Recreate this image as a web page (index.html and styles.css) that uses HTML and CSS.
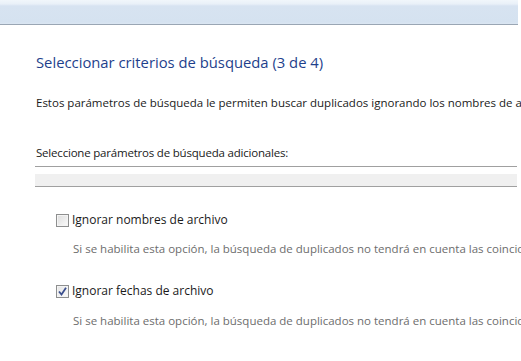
FILE: index.html
```html
<!DOCTYPE html>
<html lang="es">
<head>
    <meta charset="UTF-8">
    <meta name="viewport" content="width=device-width, initial-scale=1.0">
    <title>Seleccionar criterios de búsqueda</title>
    <link rel="stylesheet" href="styles.css">
</head>
<body>

    <!-- Window header strip -->
    <div class="titlebar"></div>

    <!-- Wizard page -->
    <div class="content">
        <h1 class="instruction">Seleccionar criterios de búsqueda (3 de 4)</h1>
        <p class="intro">Estos parámetros de búsqueda le permiten buscar duplicados ignorando los nombres de archivo, las fechas y los tamaños.</p>

        <p class="group-label">Seleccione parámetros de búsqueda adicionales:</p>
        <div class="divider"><div class="band"></div></div>

        <div class="option first">
            <label class="check"><span class="box"></span>Ignorar nombres de archivo</label>
            <p class="desc">Si se habilita esta opción, la búsqueda de duplicados no tendrá en cuenta las coincidencias de nombres de archivo.</p>
        </div>

        <div class="option">
            <label class="check"><span class="box checked">
                <svg width="9" height="9" viewBox="0 0 9 9"><path d="M1 4.5 L3.5 7.5 L8 0.8" fill="none" stroke="#3b4f8e" stroke-width="1.8"/></svg>
            </span>Ignorar fechas de archivo</label>
            <p class="desc">Si se habilita esta opción, la búsqueda de duplicados no tendrá en cuenta las coincidencias de fechas de archivo.</p>
        </div>
    </div>

</body>
</html>
```

FILE: styles.css
```css
body {
    font-family: 'Open Sans', 'Noto Sans', sans-serif;
    font-size: 11.5px;
    color: #1a1a1a;
    background-color: #fff;
    margin: 0;
    padding: 0;
    overflow: hidden;
    white-space: nowrap;
}
.titlebar {
    width: 518px;
    height: 24px;
    background: linear-gradient(to bottom, #f1f6fb 0px, #e9f0f8 4px, #d7e3f1 6px, #d5e2f0 22px, #dbe6f2 24px);
    border-bottom: 1px solid #9aa6b4;
}
.content {
    padding: 0 4px 0 35px;
}
.instruction {
    margin: 27px 0 0 1px;
    font-size: 14.8px;
    font-weight: normal;
    line-height: 20px;
    color: #1e3f8c;
}
.intro {
    margin: 23px 0 0 1px;
    line-height: 16px;
}
.group-label {
    margin: 34px 0 0 1px;
    line-height: 16px;
    letter-spacing: -0.2px;
}
.divider {
    margin-top: 5px;
    border-top: 1px solid #a0a0a0;
    border-bottom: 1px solid #a0a0a0;
    padding-top: 7px;
}
.band {
    height: 12px;
    background-color: #f0f0f0;
}
.option {
    margin-top: 26px;
    padding-left: 21px;
}
.option.first {
    margin-top: 25px;
}
.check {
    display: flex;
    align-items: center;
    gap: 3px;
    font-size: 12px;
    line-height: 16px;
}
.box {
    width: 11px;
    height: 11px;
    border: 1px solid #8e8f8f;
    background: linear-gradient(135deg, #dcdcdc, #fbfbfb);
    box-shadow: inset 0 0 0 1px #f4f4f4;
    display: flex;
    align-items: center;
    justify-content: center;
}
.box.checked {
    background: linear-gradient(135deg, #e4e4e4, #fbfbfb);
}
.desc {
    margin: 13px 0 0 17px;
    line-height: 16px;
    color: #6d6d6d;
}
.option + .option .desc {
    margin-top: 14px;
}
```
